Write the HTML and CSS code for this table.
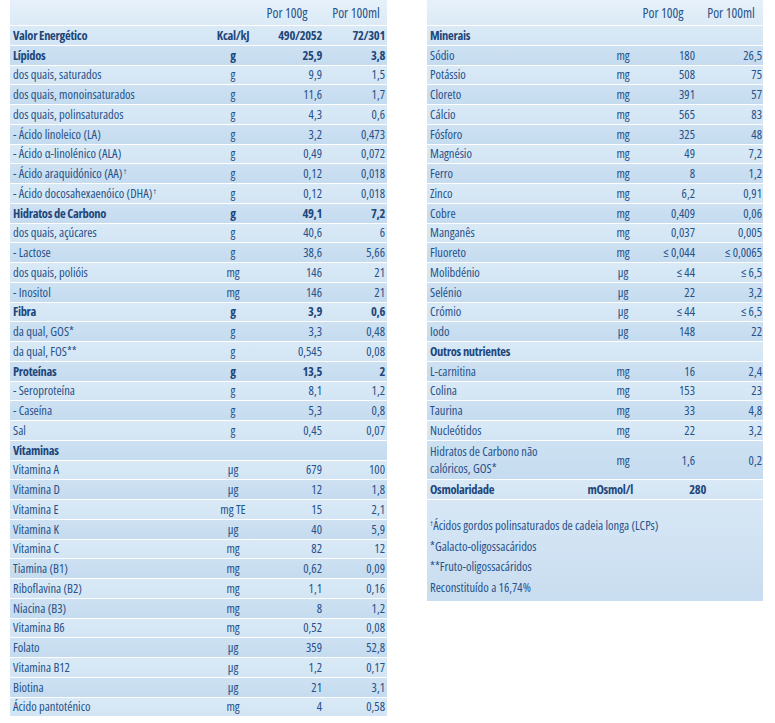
FILE: index.html
```html
<!DOCTYPE html>
<html lang="pt">
<head>
<meta charset="utf-8">
<title>Informação nutricional</title>
<link rel="stylesheet" href="styles.css">
</head>
<body>
<div class="page">
  <section class="tbl tbl-left">
    <div class="head"><span></span><span>Por 100g</span><span>Por 100ml</span></div>
    <div class="rows">
      <div class="row b"><span class="lbl">Valor Energético</span><span class="unit">Kcal/kJ</span><span class="v">490/2052</span><span class="v">72/301</span></div>
      <div class="row b"><span class="lbl">Lípidos</span><span class="unit">g</span><span class="v">25,9</span><span class="v">3,8</span></div>
      <div class="row"><span class="lbl">dos quais, saturados</span><span class="unit">g</span><span class="v">9,9</span><span class="v">1,5</span></div>
      <div class="row"><span class="lbl">dos quais, monoinsaturados</span><span class="unit">g</span><span class="v">11,6</span><span class="v">1,7</span></div>
      <div class="row"><span class="lbl">dos quais, polinsaturados</span><span class="unit">g</span><span class="v">4,3</span><span class="v">0,6</span></div>
      <div class="row"><span class="lbl">- Ácido linoleico (LA)</span><span class="unit">g</span><span class="v">3,2</span><span class="v">0,473</span></div>
      <div class="row"><span class="lbl">- Ácido α-linolénico (ALA)</span><span class="unit">g</span><span class="v">0,49</span><span class="v">0,072</span></div>
      <div class="row"><span class="lbl">- Ácido araquidónico (AA)<sup class="dag">†</sup></span><span class="unit">g</span><span class="v">0,12</span><span class="v">0,018</span></div>
      <div class="row"><span class="lbl">- Ácido docosahexaenóico (DHA)<sup class="dag">†</sup></span><span class="unit">g</span><span class="v">0,12</span><span class="v">0,018</span></div>
      <div class="row b"><span class="lbl">Hidratos de Carbono</span><span class="unit">g</span><span class="v">49,1</span><span class="v">7,2</span></div>
      <div class="row"><span class="lbl">dos quais, açúcares</span><span class="unit">g</span><span class="v">40,6</span><span class="v">6</span></div>
      <div class="row"><span class="lbl">- Lactose</span><span class="unit">g</span><span class="v">38,6</span><span class="v">5,66</span></div>
      <div class="row"><span class="lbl">dos quais, polióis</span><span class="unit">mg</span><span class="v">146</span><span class="v">21</span></div>
      <div class="row"><span class="lbl">- Inositol</span><span class="unit">mg</span><span class="v">146</span><span class="v">21</span></div>
      <div class="row b"><span class="lbl">Fibra</span><span class="unit">g</span><span class="v">3,9</span><span class="v">0,6</span></div>
      <div class="row"><span class="lbl">da qual, GOS*</span><span class="unit">g</span><span class="v">3,3</span><span class="v">0,48</span></div>
      <div class="row"><span class="lbl">da qual, FOS**</span><span class="unit">g</span><span class="v">0,545</span><span class="v">0,08</span></div>
      <div class="row b"><span class="lbl">Proteínas</span><span class="unit">g</span><span class="v">13,5</span><span class="v">2</span></div>
      <div class="row"><span class="lbl">- Seroproteína</span><span class="unit">g</span><span class="v">8,1</span><span class="v">1,2</span></div>
      <div class="row"><span class="lbl">- Caseína</span><span class="unit">g</span><span class="v">5,3</span><span class="v">0,8</span></div>
      <div class="row"><span class="lbl">Sal</span><span class="unit">g</span><span class="v">0,45</span><span class="v">0,07</span></div>
      <div class="row"><span class="lbl strong">Vitaminas</span><span class="unit"></span><span class="v"></span><span class="v"></span></div>
      <div class="row"><span class="lbl">Vitamina A</span><span class="unit">µg</span><span class="v">679</span><span class="v">100</span></div>
      <div class="row"><span class="lbl">Vitamina D</span><span class="unit">µg</span><span class="v">12</span><span class="v">1,8</span></div>
      <div class="row"><span class="lbl">Vitamina E</span><span class="unit">mg TE</span><span class="v">15</span><span class="v">2,1</span></div>
      <div class="row"><span class="lbl">Vitamina K</span><span class="unit">µg</span><span class="v">40</span><span class="v">5,9</span></div>
      <div class="row"><span class="lbl">Vitamina C</span><span class="unit">mg</span><span class="v">82</span><span class="v">12</span></div>
      <div class="row"><span class="lbl">Tiamina (B1)</span><span class="unit">mg</span><span class="v">0,62</span><span class="v">0,09</span></div>
      <div class="row"><span class="lbl">Riboflavina (B2)</span><span class="unit">mg</span><span class="v">1,1</span><span class="v">0,16</span></div>
      <div class="row"><span class="lbl">Niacina (B3)</span><span class="unit">mg</span><span class="v">8</span><span class="v">1,2</span></div>
      <div class="row"><span class="lbl">Vitamina B6</span><span class="unit">mg</span><span class="v">0,52</span><span class="v">0,08</span></div>
      <div class="row"><span class="lbl">Folato</span><span class="unit">µg</span><span class="v">359</span><span class="v">52,8</span></div>
      <div class="row"><span class="lbl">Vitamina B12</span><span class="unit">µg</span><span class="v">1,2</span><span class="v">0,17</span></div>
      <div class="row"><span class="lbl">Biotina</span><span class="unit">µg</span><span class="v">21</span><span class="v">3,1</span></div>
      <div class="row"><span class="lbl">Ácido pantoténico</span><span class="unit">mg</span><span class="v">4</span><span class="v">0,58</span></div>
    </div>
  </section>

  <section class="tbl tbl-right">
    <div class="head"><span></span><span>Por 100g</span><span>Por 100ml</span></div>
    <div class="rows">
      <div class="row"><span class="lbl strong">Minerais</span><span class="unit"></span><span class="v"></span><span class="v"></span></div>
      <div class="row"><span class="lbl">Sódio</span><span class="unit">mg</span><span class="v">180</span><span class="v">26,5</span></div>
      <div class="row"><span class="lbl">Potássio</span><span class="unit">mg</span><span class="v">508</span><span class="v">75</span></div>
      <div class="row"><span class="lbl">Cloreto</span><span class="unit">mg</span><span class="v">391</span><span class="v">57</span></div>
      <div class="row"><span class="lbl">Cálcio</span><span class="unit">mg</span><span class="v">565</span><span class="v">83</span></div>
      <div class="row"><span class="lbl">Fósforo</span><span class="unit">mg</span><span class="v">325</span><span class="v">48</span></div>
      <div class="row"><span class="lbl">Magnésio</span><span class="unit">mg</span><span class="v">49</span><span class="v">7,2</span></div>
      <div class="row"><span class="lbl">Ferro</span><span class="unit">mg</span><span class="v">8</span><span class="v">1,2</span></div>
      <div class="row"><span class="lbl">Zinco</span><span class="unit">mg</span><span class="v">6,2</span><span class="v">0,91</span></div>
      <div class="row"><span class="lbl">Cobre</span><span class="unit">mg</span><span class="v">0,409</span><span class="v">0,06</span></div>
      <div class="row"><span class="lbl">Manganês</span><span class="unit">mg</span><span class="v">0,037</span><span class="v">0,005</span></div>
      <div class="row"><span class="lbl">Fluoreto</span><span class="unit">mg</span><span class="v">≤ 0,044</span><span class="v">≤ 0,0065</span></div>
      <div class="row"><span class="lbl">Molibdénio</span><span class="unit">µg</span><span class="v">≤ 44</span><span class="v">≤ 6,5</span></div>
      <div class="row"><span class="lbl">Selénio</span><span class="unit">µg</span><span class="v">22</span><span class="v">3,2</span></div>
      <div class="row"><span class="lbl">Crómio</span><span class="unit">µg</span><span class="v">≤ 44</span><span class="v">≤ 6,5</span></div>
      <div class="row"><span class="lbl">Iodo</span><span class="unit">µg</span><span class="v">148</span><span class="v">22</span></div>
      <div class="row"><span class="lbl strong">Outros nutrientes</span><span class="unit"></span><span class="v"></span><span class="v"></span></div>
      <div class="row"><span class="lbl">L-carnitina</span><span class="unit">mg</span><span class="v">16</span><span class="v">2,4</span></div>
      <div class="row"><span class="lbl">Colina</span><span class="unit">mg</span><span class="v">153</span><span class="v">23</span></div>
      <div class="row"><span class="lbl">Taurina</span><span class="unit">mg</span><span class="v">33</span><span class="v">4,8</span></div>
      <div class="row"><span class="lbl">Nucleótidos</span><span class="unit">mg</span><span class="v">22</span><span class="v">3,2</span></div>
      <div class="row tall"><span class="lbl">Hidratos de Carbono não<br>calóricos, GOS*</span><span class="unit">mg</span><span class="v">1,6</span><span class="v">0,2</span></div>
      <div class="row osm b"><span class="lbl">Osmolaridade</span><span class="unit">mOsmol/l</span><span class="v">280</span><span class="v"></span></div>
    </div>
    <div class="notes">
      <p><sup class="dag">†</sup>Ácidos gordos polinsaturados de cadeia longa (LCPs)</p>
      <p>*Galacto-oligossacáridos</p>
      <p>**Fruto-oligossacáridos</p>
      <p>Reconstituído a 16,74%</p>
    </div>
  </section>
</div>
</body>
</html>
```

FILE: styles.css
```css
* { box-sizing: border-box; }

html, body {
  margin: 0;
  padding: 0;
  background: #ffffff;
}

body {
  font-family: "Open Sans", "DejaVu Sans Condensed", sans-serif;
  font-stretch: 75%;
  font-size: 12.5px;
  font-weight: 500;
  color: #26518a;
}

.page {
  display: flex;
  align-items: flex-start;
  gap: 40px;
  padding-left: 10px;
}

.tbl-left { width: 377px; }
.tbl-right { width: 336px; }

.head {
  display: grid;
  height: 26px;
  align-items: end;
  padding-bottom: 3px;
  background: linear-gradient(#e6f1fa, #dbeaf6);
  border-bottom: 1px solid #ffffff;
  font-size: 13.5px;
  text-align: center;
  white-space: nowrap;
}

.tbl-left .head { grid-template-columns: 239px 76px 62px; }
.tbl-right .head { grid-template-columns: 200px 72px 64px; }

.row {
  display: grid;
  align-items: center;
  height: 19.75px;
  border-bottom: 1px solid #ffffff;
  white-space: nowrap;
}

.rows .row:nth-child(odd) { background: linear-gradient(#d9e9f6, #d3e5f4); }
.rows .row:nth-child(even) { background: linear-gradient(#cde1f2, #c5dbef); }

.tbl-left .row { grid-template-columns: 195px 56px 63px 63px; }
.tbl-right .row { grid-template-columns: 171px 50px 49px 66px; }

.lbl { padding-left: 3px; }
.unit { text-align: center; }
.v { text-align: right; padding-right: 2px; }
.tbl-right .v:last-child { padding-right: 1px; }

.b, .strong {
  font-weight: 700;
  letter-spacing: -0.3px;
  color: #1d467a;
}

.row.tall {
  height: 39.5px;
}
.row.tall .lbl { line-height: 17px; }

.tbl-right .row.osm { grid-template-columns: 155px 55px 70px 56px; }
.row.osm .unit { text-align: right; padding-right: 4px; }
.row.osm .v { padding-right: 1px; }

.dag {
  font-size: 7px;
  vertical-align: 4px;
  line-height: 0;
  margin-left: 1px;
}

.notes {
  background: linear-gradient(#d7e7f5, #c9ddf0);
  padding: 16px 3px 3px 3px;
}

.notes p {
  margin: 0;
  height: 20.5px;
  line-height: 20.5px;
  white-space: nowrap;
}

.notes .dag { margin-left: 0; margin-right: 0; }
```
